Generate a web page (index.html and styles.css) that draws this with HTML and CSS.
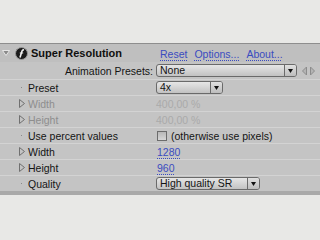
FILE: index.html
```html
<!DOCTYPE html>
<html>
<head>
<meta charset="utf-8">
<link rel="stylesheet" href="styles.css">
</head>
<body>
<div class="top"></div>
<div class="panel">
  <div class="header">
    <svg class="twirl-down" width="8" height="6" viewBox="0 0 8 6"><polygon points="0.5,0.5 7.5,0.5 4,5.5" fill="#8a8a8a" stroke="#e6e6e6" stroke-width="1"/></svg>
    <svg class="fx" width="13" height="13" viewBox="0 0 13 13"><circle cx="6.5" cy="6.5" r="6" fill="#1c1c1c" stroke="#9a9a9a" stroke-width="1"/><path d="M5 10.5 L7 4 Q7.6 2.6 9 3" fill="none" stroke="#f2f2f2" stroke-width="1.6"/><path d="M4.8 6 L8.2 6" stroke="#f2f2f2" stroke-width="1"/></svg>
    <span class="title">Super Resolution</span>
    <span class="links"><a class="lnk">Reset</a><a class="lnk">Options...</a><a class="lnk">About...</a></span>
  </div>
  <div class="row anim">
    <div class="label right">Animation Presets:</div>
    <div class="value">
      <div class="select wide"><span class="sel-text">None</span><span class="sel-btn"><svg width="5" height="4" viewBox="0 0 5 4"><polygon points="0,0 5,0 2.5,4" fill="#111"/></svg></span></div>
      <svg class="nav" width="14" height="10" viewBox="0 0 14 10"><polygon points="4.5,1 4.5,9 0.5,5" fill="#b4b4b4" stroke="#8c8c8c"/><polygon points="8.5,1 8.5,9 12.5,5" fill="#b4b4b4" stroke="#8c8c8c"/></svg>
    </div>
  </div>
  <div class="row">
    <div class="label"><span class="ic"><span class="dot"></span></span>Preset</div>
    <div class="value"><div class="select small"><span class="sel-text">4x</span><span class="sel-btn"><svg width="5" height="4" viewBox="0 0 5 4"><polygon points="0,0 5,0 2.5,4" fill="#111"/></svg></span></div></div>
  </div>
  <div class="row">
    <div class="label dis"><span class="ic"><svg width="6" height="9" viewBox="0 0 6 9"><polygon points="0.5,0.5 5.5,4.5 0.5,8.5" fill="none" stroke="#707070"/></svg></span>Width</div>
    <div class="value faint">400,00 %</div>
  </div>
  <div class="row">
    <div class="label dis"><span class="ic"><svg width="6" height="9" viewBox="0 0 6 9"><polygon points="0.5,0.5 5.5,4.5 0.5,8.5" fill="none" stroke="#707070"/></svg></span>Height</div>
    <div class="value faint">400,00 %</div>
  </div>
  <div class="row">
    <div class="label"><span class="ic"><span class="dot"></span></span>Use percent values</div>
    <div class="value"><span class="check"></span><span class="cbtext">(otherwise use pixels)</span></div>
  </div>
  <div class="row">
    <div class="label"><span class="ic"><svg width="6" height="9" viewBox="0 0 6 9"><polygon points="0.5,0.5 5.5,4.5 0.5,8.5" fill="none" stroke="#707070"/></svg></span>Width</div>
    <div class="value"><a class="num">1280</a></div>
  </div>
  <div class="row">
    <div class="label"><span class="ic"><svg width="6" height="9" viewBox="0 0 6 9"><polygon points="0.5,0.5 5.5,4.5 0.5,8.5" fill="none" stroke="#707070"/></svg></span>Height</div>
    <div class="value"><a class="num">960</a></div>
  </div>
  <div class="row">
    <div class="label"><span class="ic"><span class="dot"></span></span>Quality</div>
    <div class="value"><div class="select quality"><span class="sel-text">High quality SR</span><span class="sel-btn"><svg width="5" height="4" viewBox="0 0 5 4"><polygon points="0,0 5,0 2.5,4" fill="#111"/></svg></span></div></div>
  </div>
</div>
</body>
</html>
```
FILE: styles.css
```css
html, body {
  margin: 0;
  padding: 0;
  background: #e8e8e6;
  font-family: "Liberation Sans", Arial, sans-serif;
  font-size: 10px;
  color: #141414;
}
.top {
  height: 43px;
}
.panel {
  background: #c4c4c4;
  border-top: 1px solid #8e8e8e;
  border-bottom: 4px solid #a9a9a9;
}
.header {
  height: 18px;
  display: flex;
  align-items: center;
  background: #bfbfbf;
  box-sizing: border-box;
}
.twirl-down {
  margin-left: 2px;
  margin-right: 5px;
}
.fx {
  margin-right: 3px;
}
.title {
  font-weight: bold;
  font-size: 11px;
  color: #101010;
  width: 129px;
}
.links {
  display: flex;
  gap: 7px;
  padding-top: 1px;
}
.lnk, .num {
  color: #3a4cc0;
  text-decoration: underline dotted;
  text-underline-offset: 2px;
  font-size: 10.5px;
}
.row {
  display: grid;
  grid-template-columns: 156px 1fr;
  height: 16px;
  box-sizing: border-box;
  border-top: 1px solid #d3d3d3;
  align-items: center;
}
.row.anim {
  height: 17px;
  border-top: none;
}
.label {
  display: flex;
  align-items: center;
  padding-left: 19px;
  font-size: 10.5px;
}
.label.right {
  justify-content: flex-end;
  padding-left: 0;
  padding-right: 3px;
}
.label.dis {
  color: #8e8e8e;
}
.ic {
  width: 9px;
  display: flex;
  align-items: center;
}
.dot {
  width: 1px;
  height: 1px;
  margin-left: 2px;
  background: #8a8a8a;
}
.value {
  display: flex;
  align-items: center;
  font-size: 10.5px;
}
.faint {
  color: #aaaaaa;
}
.select {
  display: flex;
  height: 13px;
  box-sizing: border-box;
  border: 1px solid #6a6a6a;
  border-radius: 3px;
  background: linear-gradient(#e6e6e6, #c2c2c2);
  overflow: hidden;
}
.sel-text {
  flex: 1;
  padding-left: 3px;
  line-height: 11px;
  font-size: 10.5px;
}
.sel-btn {
  width: 11px;
  border-left: 1px solid #6a6a6a;
  display: flex;
  align-items: center;
  justify-content: center;
  background: linear-gradient(#e0e0e0, #bdbdbd);
}
.select.wide {
  width: 141px;
}
.select.small {
  width: 67px;
}
.select.quality {
  width: 104px;
}
.nav {
  margin-left: 5px;
}
.check {
  width: 10px;
  height: 10px;
  box-sizing: border-box;
  border: 1px solid #6c6c6c;
  background: linear-gradient(#b8b8b8, #d6d6d6);
  margin-left: 1px;
  margin-right: 4px;
}
.num {
  margin-left: 1px;
}
```
